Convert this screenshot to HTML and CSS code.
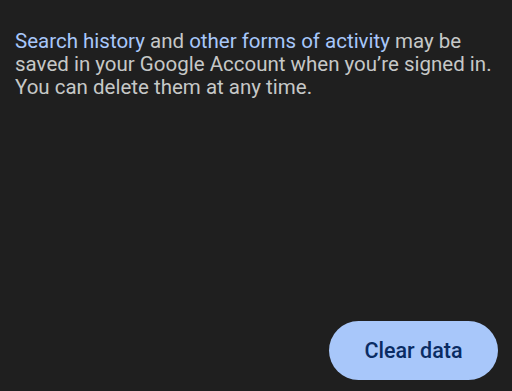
FILE: index.html
```html
<!DOCTYPE html>
<html>
<head>
<meta charset="utf-8">
<link rel="stylesheet" href="styles.css">
</head>
<body>
<div class="page">
  <p class="info"><a class="link">Search history</a> and <a class="link">other forms of activity</a> may be saved in your Google Account when you’re signed in. You can delete them at any time.</p>
  <div class="actions">
    <button class="clear">Clear data</button>
  </div>
</div>
</body>
</html>
```
FILE: styles.css
```css
html, body {
  margin: 0;
  padding: 0;
  background: #1f1f1f;
}
.page {
  width: 512px;
  height: 391px;
  box-sizing: border-box;
  padding: 30px 14px 11px 15px;
  display: flex;
  flex-direction: column;
  justify-content: space-between;
  font-family: Roboto, "Noto Sans", sans-serif;
}
.info {
  margin: 0 -12px 0 0;
  font-size: 20.5px;
  line-height: 23px;
  color: #c6c8c7;
}
.link {
  color: #a8c7fa;
}
.actions {
  display: flex;
  justify-content: flex-end;
}
.clear {
  width: 169px;
  height: 59px;
  border: none;
  border-radius: 30px;
  background: #a8c7fa;
  color: #0a2c63;
  font-family: Roboto, "Noto Sans", sans-serif;
  font-size: 21.5px;
  font-weight: 500;
  padding: 0;
}
```
